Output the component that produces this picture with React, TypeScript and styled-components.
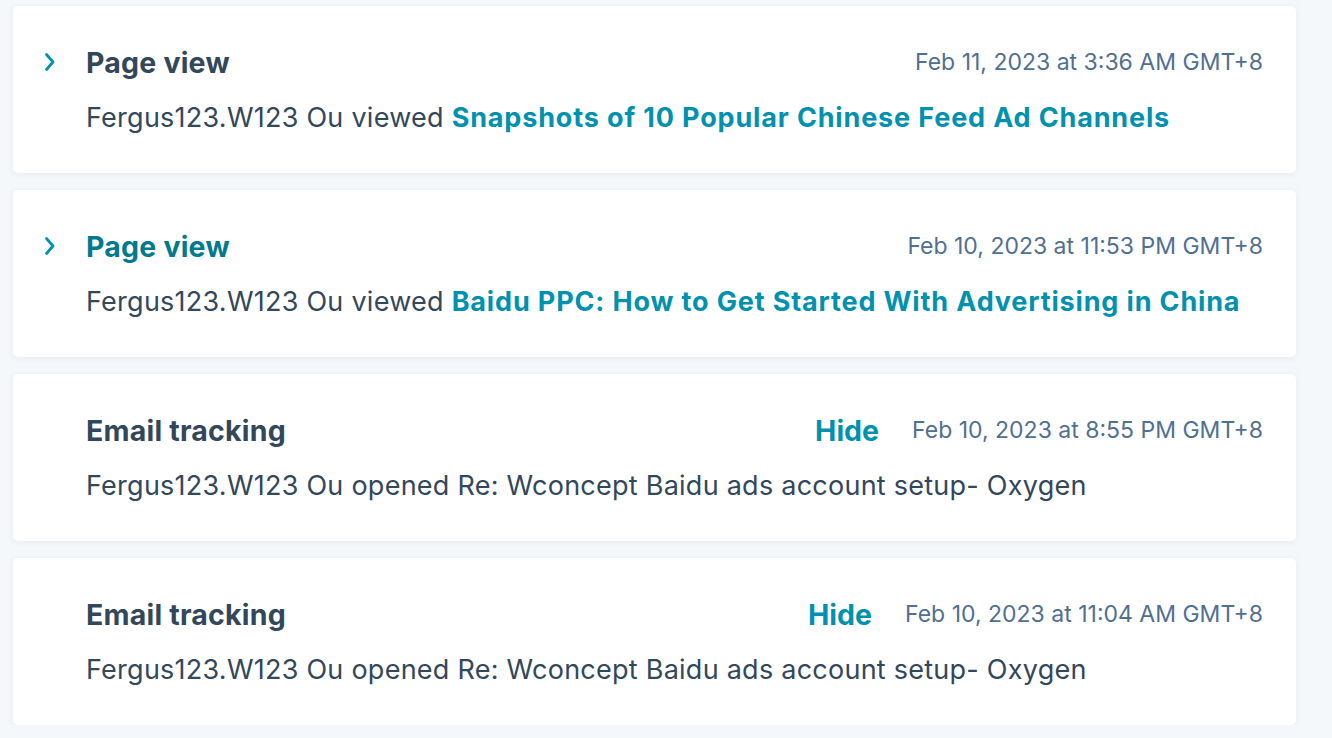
import React from "react";
import styled, { createGlobalStyle } from "styled-components";

const Global = createGlobalStyle`
  html, body { margin: 0; padding: 0; background: #f5f8fa; }
  body { font-family: Inter, "Open Sans", sans-serif; -webkit-font-smoothing: antialiased; }
`;

const List = styled.div`
  display: flex;
  flex-direction: column;
  gap: 17px;
  padding: 6px 36px 0 13px;
`;

const Card = styled.div`
  background: #ffffff;
  border-radius: 5px;
  box-shadow: 0 1px 6px rgba(45, 62, 80, 0.08);
  display: grid;
  grid-template-columns: 42px 1fr;
  padding: 40px 33px 39px 31px;
  height: 167px;
  box-sizing: border-box;
`;

const ChevronCell = styled.div`
  display: flex;
  align-items: center;
  height: 32px;
  color: #0091ae;
`;

const Main = styled.div`
  display: flex;
  flex-direction: column;
  gap: 24px;
`;

const Header = styled.div`
  display: flex;
  align-items: center;
  height: 32px;
`;

const Title = styled.div<{ $active?: boolean }>`
  font-size: 28.5px;
  font-weight: 700;
  letter-spacing: 0.2px;
  color: ${(p) => (p.$active ? "#007a8c" : "#33475b")};
  flex: 1;
`;

const Hide = styled.span`
  font-size: 28.5px;
  font-weight: 700;
  color: #0091ae;
  margin-right: 33px;
`;

const DateText = styled.span`
  font-size: 23px;
  color: #516f90;
`;

const Body = styled.div`
  font-size: 27px;
  line-height: 32px;
  letter-spacing: 0.25px;
  color: #33475b;
  white-space: nowrap;
`;

const Link = styled.a`
  color: #0091ae;
  font-weight: 650;
  letter-spacing: 0.85px;
  text-decoration: none;
`;

const Chevron = () => (
  <svg width="12" height="20" viewBox="0 0 12 20" fill="none">
    <path d="M2.5 2.5l6.5 7.5-6.5 7.5" stroke="currentColor" strokeWidth="2.8" strokeLinecap="round" strokeLinejoin="round" />
  </svg>
);

type Item = {
  title: string;
  chevron: boolean;
  active?: boolean;
  hide?: boolean;
  date: string;
  body: string;
  link?: string;
};

const items: Item[] = [
  { title: "Page view", chevron: true, date: "Feb 11, 2023 at 3:36 AM GMT+8", body: "Fergus123.W123 Ou viewed ", link: "Snapshots of 10 Popular Chinese Feed Ad Channels" },
  { title: "Page view", chevron: true, active: true, date: "Feb 10, 2023 at 11:53 PM GMT+8", body: "Fergus123.W123 Ou viewed ", link: "Baidu PPC: How to Get Started With Advertising in China" },
  { title: "Email tracking", chevron: false, hide: true, date: "Feb 10, 2023 at 8:55 PM GMT+8", body: "Fergus123.W123 Ou opened Re: Wconcept Baidu ads account setup- Oxygen" },
  { title: "Email tracking", chevron: false, hide: true, date: "Feb 10, 2023 at 11:04 AM GMT+8", body: "Fergus123.W123 Ou opened Re: Wconcept Baidu ads account setup- Oxygen" },
];

export default function App() {
  return (
    <>
      <Global />
      <List>
        {items.map((it, i) => (
          <Card key={i}>
            <ChevronCell>{it.chevron && <Chevron />}</ChevronCell>
            <Main>
              <Header>
                <Title $active={it.active}>{it.title}</Title>
                {it.hide && <Hide>Hide</Hide>}
                <DateText>{it.date}</DateText>
              </Header>
              <Body>
                {it.body}
                {it.link && <Link href="#">{it.link}</Link>}
              </Body>
            </Main>
          </Card>
        ))}
      </List>
    </>
  );
}
